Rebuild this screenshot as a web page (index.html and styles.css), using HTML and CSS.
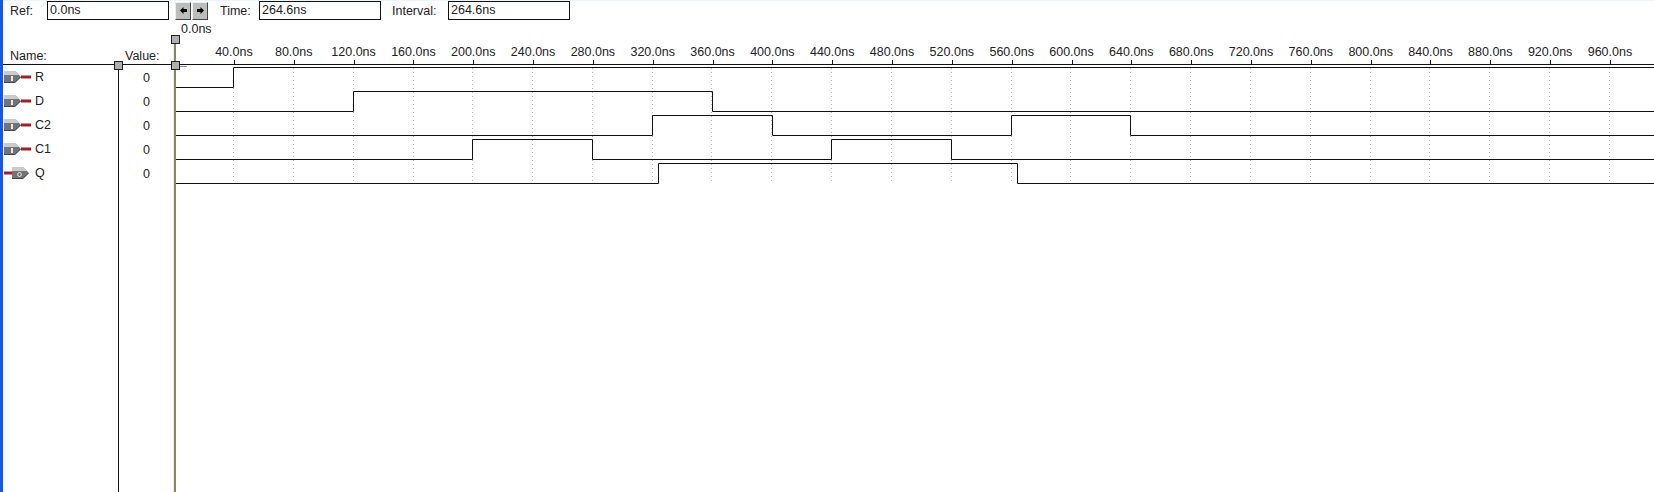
FILE: index.html
```html
<!DOCTYPE html>
<html lang="en">
<head>
    <meta charset="UTF-8">
    <meta name="viewport" content="width=device-width, initial-scale=1.0">
    <title>Waveform Editor</title>
    <link rel="stylesheet" href="styles.css">
</head>
<body>
    <svg class="defs" width="0" height="0">
        <symbol id="pin-in" viewBox="0 0 27 12">
            <path d="M0 0H11L17 6L11 12H0Z" fill="#747474"/>
            <path d="M0 0H11L15 4H0Z" fill="#cbcbcb"/>
            <path d="M0 11.5H11L16.5 6" fill="none" stroke="#444"/>
            <rect x="7" y="5" width="2" height="5" fill="#e8e8e8"/>
            <rect x="17" y="4.5" width="10" height="3" fill="#a32020"/>
        </symbol>
        <symbol id="pin-out" viewBox="0 0 27 12">
            <rect x="0" y="4.5" width="9" height="3" fill="#a32020"/>
            <path d="M8 0H19L25 6L19 12H8Z" fill="#747474"/>
            <path d="M8 0H19L23 4H8Z" fill="#cbcbcb"/>
            <path d="M8 11.5H19L24.5 6" fill="none" stroke="#444"/>
            <ellipse cx="15.5" cy="7.5" rx="1.8" ry="2" fill="none" stroke="#e8e8e8"/>
        </symbol>
    </svg>
    <div class="app">
        <div class="toolbar">
            <span class="tool-label ref-label">Ref:</span>
            <div class="field">0.0ns</div>
            <div class="steppers">
                <button class="step"><svg width="7" height="7" viewBox="0 0 7 7"><path d="M0 3.5L3.5 0V2H7V5H3.5V7Z"/></svg></button>
                <button class="step"><svg width="7" height="7" viewBox="0 0 7 7"><path d="M7 3.5L3.5 0V2H0V5H3.5V7Z"/></svg></button>
            </div>
            <span class="tool-label time-label">Time:</span>
            <div class="field">264.6ns</div>
            <span class="tool-label interval-label">Interval:</span>
            <div class="field">264.6ns</div>
        </div>

        <div class="header">
            <div class="col-name">Name:</div>
            <div class="col-value">Value:</div>
            <div class="ruler">
                <span>40.0ns</span><span>80.0ns</span><span>120.0ns</span><span>160.0ns</span>
                <span>200.0ns</span><span>240.0ns</span><span>280.0ns</span><span>320.0ns</span>
                <span>360.0ns</span><span>400.0ns</span><span>440.0ns</span><span>480.0ns</span>
                <span>520.0ns</span><span>560.0ns</span><span>600.0ns</span><span>640.0ns</span>
                <span>680.0ns</span><span>720.0ns</span><span>760.0ns</span><span>800.0ns</span>
                <span>840.0ns</span><span>880.0ns</span><span>920.0ns</span><span>960.0ns</span>
            </div>
        </div>

        <div class="panes">
            <div class="names">
                <div class="signal"><svg class="pin"><use href="#pin-in"/></svg>R</div>
                <div class="signal"><svg class="pin"><use href="#pin-in"/></svg>D</div>
                <div class="signal"><svg class="pin"><use href="#pin-in"/></svg>C2</div>
                <div class="signal"><svg class="pin"><use href="#pin-in"/></svg>C1</div>
                <div class="signal"><svg class="pin"><use href="#pin-out"/></svg>Q</div>
            </div>
            <div class="values">
                <div>0</div>
                <div>0</div>
                <div>0</div>
                <div>0</div>
                <div>0</div>
            </div>
            <svg class="waves" viewBox="174 65 1480 427" width="1480" height="427">
                <g class="grid">
                    <path d="M233.5 68V183M293.5 68V183M353.5 68V183M413.5 68V183M472.5 68V183M532.5 68V183M592.5 68V183M652.5 68V183"/>
                    <path d="M711.5 68V183M771.5 68V183M831.5 68V183M891.5 68V183M951.5 68V183M1011.5 68V183M1070.5 68V183M1130.5 68V183"/>
                    <path d="M1190.5 68V183M1250.5 68V183M1310.5 68V183M1370.5 68V183M1429.5 68V183M1489.5 68V183M1549.5 68V183M1609.5 68V183"/>
                </g>
                <g class="trace">
                    <path d="M176 87.5H233.5V67.5H1654"/>
                    <path d="M176 111.5H353.5V91.5H712.5V111.5H1654"/>
                    <path d="M176 135.5H652.5V115.5H772.5V135.5H1011.5V115.5H1130.5V135.5H1654"/>
                    <path d="M176 159.5H472.5V139.5H592.5V159.5H831.5V139.5H951.5V159.5H1654"/>
                    <path d="M176 183.5H658.5V163.5H1017.5V183.5H1654"/>
                </g>
            </svg>
        </div>

        <!-- splitter and cursor sit on top of the panes -->
        <div class="cursor"></div>
        <div class="cursor-time">0.0ns</div>
        <div class="cursor-mark"></div>
        <div class="handle split-handle"></div>
        <div class="handle cursor-top"></div>
        <div class="handle cursor-mid"></div>
    </div>
</body>
</html>
```
FILE: styles.css
```css
html, body {
    margin: 0;
    height: 100%;
    overflow: hidden;
}

body {
    font-family: "Liberation Sans", Arial, sans-serif;
    font-size: 12.5px;
    color: #222;
    background: #fff;
}

.defs {
    position: absolute;
}

.app {
    position: relative;
    height: 492px;
    box-sizing: border-box;
    border-left: 3px solid #1c55de;
}

.toolbar {
    display: flex;
    align-items: center;
    height: 20px;
    box-sizing: border-box;
    border-top: 1px solid #eaf6fc;
}

.ref-label {
    margin-left: 7px;
    width: 37px;
}

.time-label {
    margin-left: 12px;
    width: 39px;
}

.interval-label {
    margin-left: 11px;
    width: 56px;
}

.field {
    width: 118px;
    height: 17px;
    line-height: 17px;
    border: 1px solid #111;
    padding-left: 2px;
}

.steppers {
    display: flex;
    gap: 1px;
    margin-left: 6px;
}

.step {
    width: 16px;
    height: 18px;
    padding: 0;
    display: flex;
    align-items: center;
    justify-content: center;
    background: #bdbdbd;
    border: 1px solid;
    border-color: #eee #444 #444 #eee;
}

.header {
    display: flex;
    height: 44px;
    border-bottom: 1px solid #111;
}

.col-name {
    width: 115px;
    box-sizing: border-box;
    padding: 29px 0 0 7px;
}

.col-value {
    width: 56px;
    box-sizing: border-box;
    padding: 29px 0 0 7px;
}

.ruler {
    display: flex;
    padding: 25px 0 0 30px;
}

.ruler span {
    position: relative;
    width: 59.83px;
    flex: none;
    text-align: center;
    height: 19px;
}

.ruler span::after {
    content: "";
    position: absolute;
    left: 50%;
    bottom: 0;
    width: 1px;
    height: 4px;
    background: #111;
}

.panes {
    display: flex;
}

.names {
    width: 115px;
}

.signal {
    display: flex;
    align-items: center;
    height: 24px;
    box-sizing: border-box;
    padding-left: 1px;
}

.pin {
    width: 27px;
    height: 12px;
    margin-right: 4px;
}

.values {
    width: 56px;
    box-sizing: border-box;
    height: 427px;
    padding-top: 1px;
    border-left: 1px solid #111;
    text-align: center;
}

.values div {
    height: 24px;
    line-height: 24px;
}

.waves {
    display: block;
    flex: none;
}

.grid path {
    fill: none;
    stroke: #bbb;
    stroke-dasharray: 1 3;
}

.trace path {
    fill: none;
    stroke: #111;
    stroke-width: 1;
}

.cursor {
    position: absolute;
    left: 170px;
    top: 40px;
    bottom: 0;
    width: 2px;
    background: #85856a;
    border-left: 1px solid #f4f4d8;
}

.cursor-time {
    position: absolute;
    left: 178px;
    top: 22px;
}

.handle {
    position: absolute;
    width: 7px;
    height: 7px;
    background: #b0b0b0;
    border: 1px solid #222;
}

.split-handle {
    left: 111px;
    top: 61px;
}

.cursor-top {
    left: 168px;
    top: 35px;
}

.cursor-mid {
    left: 168px;
    top: 61px;
}

.cursor-mark {
    position: absolute;
    left: 177px;
    top: 66px;
    width: 7px;
    height: 1px;
    background: #8a8ab0;
}
```
